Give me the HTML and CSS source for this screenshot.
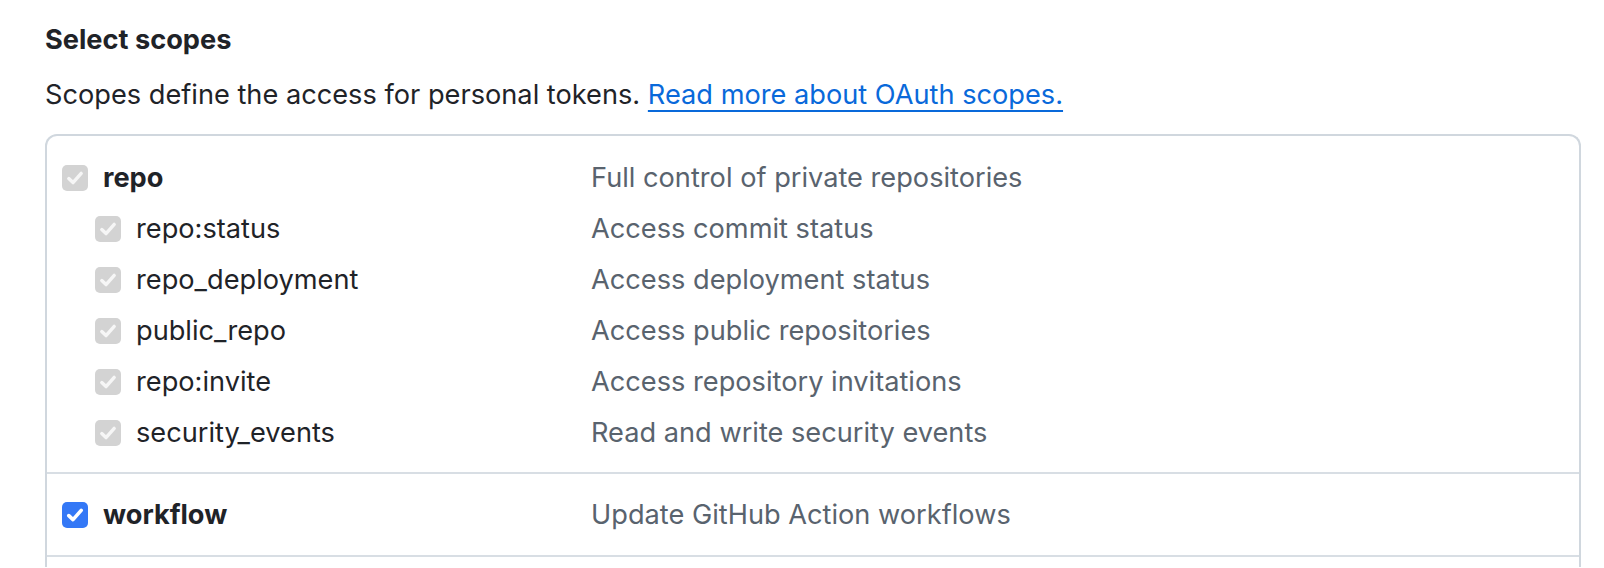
FILE: index.html
```html
<!DOCTYPE html>
<html lang="en">
<head>
<meta charset="utf-8">
<title>Select scopes</title>
<link rel="stylesheet" href="styles.css">
</head>
<body>
<div class="page">
  <h3 class="title">Select scopes</h3>
  <p class="note">Scopes define the access for personal tokens. <a href="#" class="link">Read more about OAuth scopes.</a></p>
  <div class="scopes">
    <div class="group group-first">
      <div class="row">
        <label class="label parent"><span class="cb cb-disabled"><svg viewBox="0 0 26 26" width="26" height="26"><path d="M6.8 13.6 L11 17.6 L19.2 8.4" fill="none" stroke="#f6f6f6" stroke-width="3.4" stroke-linecap="round" stroke-linejoin="round"/></svg></span><span class="name">repo</span></label>
        <span class="desc">Full control of private repositories</span>
      </div>
      <div class="row">
        <label class="label child"><span class="cb cb-disabled"><svg viewBox="0 0 26 26" width="26" height="26"><path d="M6.8 13.6 L11 17.6 L19.2 8.4" fill="none" stroke="#f6f6f6" stroke-width="3.4" stroke-linecap="round" stroke-linejoin="round"/></svg></span><span class="name">repo:status</span></label>
        <span class="desc">Access commit status</span>
      </div>
      <div class="row">
        <label class="label child"><span class="cb cb-disabled"><svg viewBox="0 0 26 26" width="26" height="26"><path d="M6.8 13.6 L11 17.6 L19.2 8.4" fill="none" stroke="#f6f6f6" stroke-width="3.4" stroke-linecap="round" stroke-linejoin="round"/></svg></span><span class="name">repo_deployment</span></label>
        <span class="desc">Access deployment status</span>
      </div>
      <div class="row">
        <label class="label child"><span class="cb cb-disabled"><svg viewBox="0 0 26 26" width="26" height="26"><path d="M6.8 13.6 L11 17.6 L19.2 8.4" fill="none" stroke="#f6f6f6" stroke-width="3.4" stroke-linecap="round" stroke-linejoin="round"/></svg></span><span class="name">public_repo</span></label>
        <span class="desc">Access public repositories</span>
      </div>
      <div class="row">
        <label class="label child"><span class="cb cb-disabled"><svg viewBox="0 0 26 26" width="26" height="26"><path d="M6.8 13.6 L11 17.6 L19.2 8.4" fill="none" stroke="#f6f6f6" stroke-width="3.4" stroke-linecap="round" stroke-linejoin="round"/></svg></span><span class="name">repo:invite</span></label>
        <span class="desc">Access repository invitations</span>
      </div>
      <div class="row">
        <label class="label child"><span class="cb cb-disabled"><svg viewBox="0 0 26 26" width="26" height="26"><path d="M6.8 13.6 L11 17.6 L19.2 8.4" fill="none" stroke="#f6f6f6" stroke-width="3.4" stroke-linecap="round" stroke-linejoin="round"/></svg></span><span class="name">security_events</span></label>
        <span class="desc">Read and write security events</span>
      </div>
    </div>
    <div class="group">
      <div class="row">
        <label class="label parent"><span class="cb cb-checked"><svg viewBox="0 0 26 26" width="26" height="26"><path d="M6.8 13.6 L11 17.6 L19.2 8.4" fill="none" stroke="#ffffff" stroke-width="3.6" stroke-linecap="round" stroke-linejoin="round"/></svg></span><span class="name">workflow</span></label>
        <span class="desc">Update GitHub Action workflows</span>
      </div>
    </div>
    <div class="group group-rest"></div>
  </div>
</div>
</body>
</html>
```

FILE: styles.css
```css
html, body {
  margin: 0;
  padding: 0;
  background: #ffffff;
}

body {
  font-family: Inter, "Liberation Sans", Arial, sans-serif;
  font-size: 27.2px;
  color: #1f2328;
  overflow: hidden;
}

.page {
  padding: 23px 0 0 45px;
  width: 1536px;
}

.title {
  margin: 0;
  font-size: 27.2px;
  font-weight: 700;
  line-height: 34px;
}

.note {
  margin: 21px 0 0 0;
  line-height: 34px;
}

.link {
  color: #0969da;
  text-decoration: underline;
  text-underline-offset: 6px;
  text-decoration-thickness: 2px;
}

.scopes {
  margin-top: 22px;
  border: 2px solid #d0d7de;
  border-bottom: none;
  border-radius: 12px 12px 0 0;
}

.group {
  padding: 15px 0 15px 15px;
  border-bottom: 2px solid #d8dee4;
}

.group-first {
  padding-top: 16px;
  padding-bottom: 14px;
}

.group-rest {
  border-bottom: none;
  padding: 0;
  height: 10px;
}

.row {
  display: grid;
  grid-template-columns: 529px 1fr;
  align-items: center;
  height: 51px;
}

.label {
  display: flex;
  align-items: center;
  gap: 15px;
}

.child {
  padding-left: 33px;
}

.parent .name {
  font-weight: 700;
}

.cb {
  display: block;
  width: 26px;
  height: 26px;
  border-radius: 5px;
  flex: none;
}

.cb svg {
  display: block;
}

.cb-disabled {
  background: #d3d3d3;
}

.cb-checked {
  background: #3478f6;
}

.desc {
  color: #59636e;
}
```
